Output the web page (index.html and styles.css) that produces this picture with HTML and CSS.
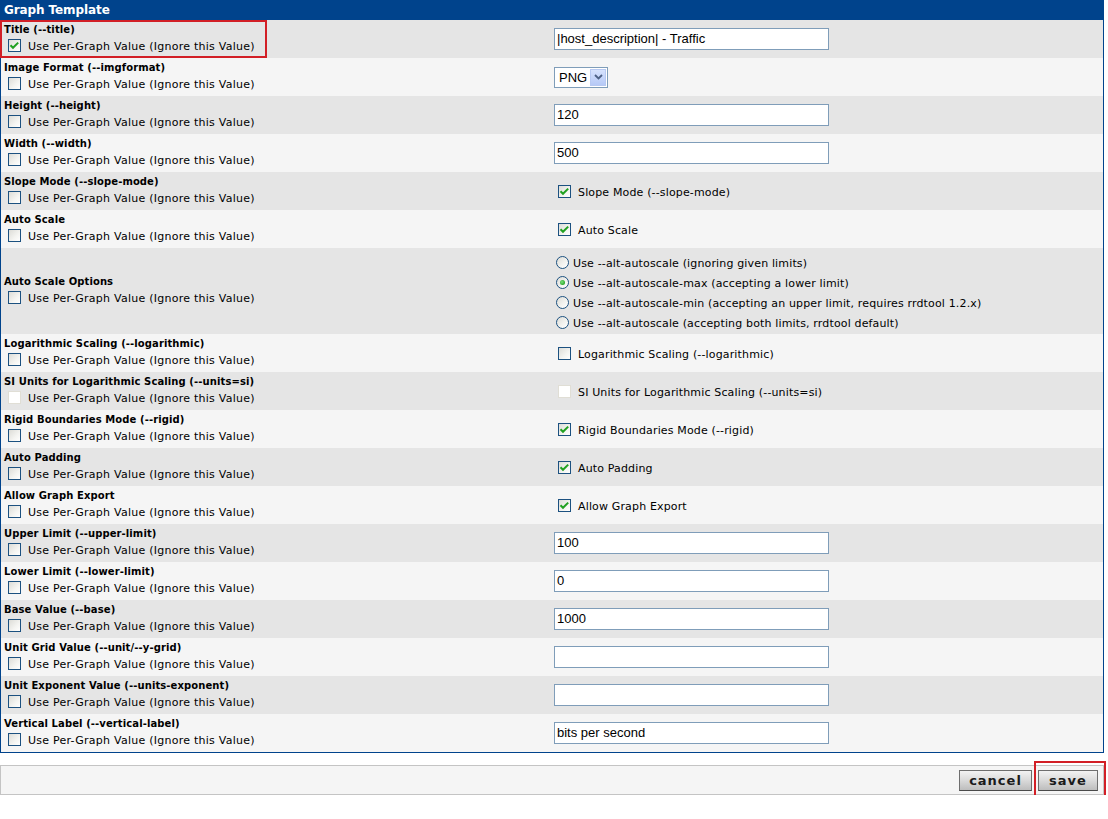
FILE: index.html
```html
<!DOCTYPE html>
<html>
<head>
<meta charset="utf-8">
<link rel="stylesheet" href="styles.css">
</head>
<body>
<div class="panel">
  <div class="panel-head">Graph Template</div>

  <div class="row dark">
    <div class="lcell">
      <div class="lbl">Title (--title)</div>
      <div class="useline"><span class="cb"><svg viewBox="0 0 13 13" width="13" height="13"><path d="M2.5 6.2 L5 8.8 L10.2 3.6" fill="none" stroke="#21a121" stroke-width="2"/></svg></span><span class="usetxt">Use Per-Graph Value (Ignore this Value)</span></div>
      <div class="hl-title"></div>
    </div>
    <div class="rcell"><div class="txt">|host_description| - Traffic</div></div>
  </div>

  <div class="row light">
    <div class="lcell">
      <div class="lbl">Image Format (--imgformat)</div>
      <div class="useline"><span class="cb"></span><span class="usetxt">Use Per-Graph Value (Ignore this Value)</span></div>
    </div>
    <div class="rcell"><div class="sel"><span class="selv">PNG</span><span class="selbtn"><svg viewBox="0 0 9 6" width="9" height="6"><path d="M1 1 L4.5 4.5 L8 1" fill="none" stroke="#4d6185" stroke-width="1.8"/></svg></span></div></div>
  </div>

  <div class="row dark">
    <div class="lcell">
      <div class="lbl">Height (--height)</div>
      <div class="useline"><span class="cb"></span><span class="usetxt">Use Per-Graph Value (Ignore this Value)</span></div>
    </div>
    <div class="rcell"><div class="txt">120</div></div>
  </div>

  <div class="row light">
    <div class="lcell">
      <div class="lbl">Width (--width)</div>
      <div class="useline"><span class="cb"></span><span class="usetxt">Use Per-Graph Value (Ignore this Value)</span></div>
    </div>
    <div class="rcell"><div class="txt">500</div></div>
  </div>

  <div class="row dark">
    <div class="lcell">
      <div class="lbl">Slope Mode (--slope-mode)</div>
      <div class="useline"><span class="cb"></span><span class="usetxt">Use Per-Graph Value (Ignore this Value)</span></div>
    </div>
    <div class="rcell"><div class="rcheck"><span class="cb"><svg viewBox="0 0 13 13" width="13" height="13"><path d="M2.5 6.2 L5 8.8 L10.2 3.6" fill="none" stroke="#21a121" stroke-width="2"/></svg></span><span class="usetxt">Slope Mode (--slope-mode)</span></div></div>
  </div>

  <div class="row light">
    <div class="lcell">
      <div class="lbl">Auto Scale</div>
      <div class="useline"><span class="cb"></span><span class="usetxt">Use Per-Graph Value (Ignore this Value)</span></div>
    </div>
    <div class="rcell"><div class="rcheck"><span class="cb"><svg viewBox="0 0 13 13" width="13" height="13"><path d="M2.5 6.2 L5 8.8 L10.2 3.6" fill="none" stroke="#21a121" stroke-width="2"/></svg></span><span class="usetxt">Auto Scale</span></div></div>
  </div>

  <div class="row dark tall">
    <div class="lcell">
      <div class="lbl">Auto Scale Options</div>
      <div class="useline"><span class="cb"></span><span class="usetxt">Use Per-Graph Value (Ignore this Value)</span></div>
    </div>
    <div class="rcell">
      <div class="radios">
        <div class="rline"><span class="rb"></span><span class="rtxt">Use --alt-autoscale (ignoring given limits)</span></div>
        <div class="rline"><span class="rb on"><span class="dot"></span></span><span class="rtxt">Use --alt-autoscale-max (accepting a lower limit)</span></div>
        <div class="rline"><span class="rb"></span><span class="rtxt">Use --alt-autoscale-min (accepting an upper limit, requires rrdtool 1.2.x)</span></div>
        <div class="rline"><span class="rb"></span><span class="rtxt">Use --alt-autoscale (accepting both limits, rrdtool default)</span></div>
      </div>
    </div>
  </div>

  <div class="row light">
    <div class="lcell">
      <div class="lbl">Logarithmic Scaling (--logarithmic)</div>
      <div class="useline"><span class="cb"></span><span class="usetxt">Use Per-Graph Value (Ignore this Value)</span></div>
    </div>
    <div class="rcell"><div class="rcheck"><span class="cb"></span><span class="usetxt">Logarithmic Scaling (--logarithmic)</span></div></div>
  </div>

  <div class="row dark">
    <div class="lcell">
      <div class="lbl">SI Units for Logarithmic Scaling (--units=si)</div>
      <div class="useline"><span class="cb off"></span><span class="usetxt">Use Per-Graph Value (Ignore this Value)</span></div>
    </div>
    <div class="rcell"><div class="rcheck"><span class="cb off"></span><span class="usetxt">SI Units for Logarithmic Scaling (--units=si)</span></div></div>
  </div>

  <div class="row light">
    <div class="lcell">
      <div class="lbl">Rigid Boundaries Mode (--rigid)</div>
      <div class="useline"><span class="cb"></span><span class="usetxt">Use Per-Graph Value (Ignore this Value)</span></div>
    </div>
    <div class="rcell"><div class="rcheck"><span class="cb"><svg viewBox="0 0 13 13" width="13" height="13"><path d="M2.5 6.2 L5 8.8 L10.2 3.6" fill="none" stroke="#21a121" stroke-width="2"/></svg></span><span class="usetxt">Rigid Boundaries Mode (--rigid)</span></div></div>
  </div>

  <div class="row dark">
    <div class="lcell">
      <div class="lbl">Auto Padding</div>
      <div class="useline"><span class="cb"></span><span class="usetxt">Use Per-Graph Value (Ignore this Value)</span></div>
    </div>
    <div class="rcell"><div class="rcheck"><span class="cb"><svg viewBox="0 0 13 13" width="13" height="13"><path d="M2.5 6.2 L5 8.8 L10.2 3.6" fill="none" stroke="#21a121" stroke-width="2"/></svg></span><span class="usetxt">Auto Padding</span></div></div>
  </div>

  <div class="row light">
    <div class="lcell">
      <div class="lbl">Allow Graph Export</div>
      <div class="useline"><span class="cb"></span><span class="usetxt">Use Per-Graph Value (Ignore this Value)</span></div>
    </div>
    <div class="rcell"><div class="rcheck"><span class="cb"><svg viewBox="0 0 13 13" width="13" height="13"><path d="M2.5 6.2 L5 8.8 L10.2 3.6" fill="none" stroke="#21a121" stroke-width="2"/></svg></span><span class="usetxt">Allow Graph Export</span></div></div>
  </div>

  <div class="row dark">
    <div class="lcell">
      <div class="lbl">Upper Limit (--upper-limit)</div>
      <div class="useline"><span class="cb"></span><span class="usetxt">Use Per-Graph Value (Ignore this Value)</span></div>
    </div>
    <div class="rcell"><div class="txt">100</div></div>
  </div>

  <div class="row light">
    <div class="lcell">
      <div class="lbl">Lower Limit (--lower-limit)</div>
      <div class="useline"><span class="cb"></span><span class="usetxt">Use Per-Graph Value (Ignore this Value)</span></div>
    </div>
    <div class="rcell"><div class="txt">0</div></div>
  </div>

  <div class="row dark">
    <div class="lcell">
      <div class="lbl">Base Value (--base)</div>
      <div class="useline"><span class="cb"></span><span class="usetxt">Use Per-Graph Value (Ignore this Value)</span></div>
    </div>
    <div class="rcell"><div class="txt">1000</div></div>
  </div>

  <div class="row light">
    <div class="lcell">
      <div class="lbl">Unit Grid Value (--unit/--y-grid)</div>
      <div class="useline"><span class="cb"></span><span class="usetxt">Use Per-Graph Value (Ignore this Value)</span></div>
    </div>
    <div class="rcell"><div class="txt"></div></div>
  </div>

  <div class="row dark">
    <div class="lcell">
      <div class="lbl">Unit Exponent Value (--units-exponent)</div>
      <div class="useline"><span class="cb"></span><span class="usetxt">Use Per-Graph Value (Ignore this Value)</span></div>
    </div>
    <div class="rcell"><div class="txt"></div></div>
  </div>

  <div class="row light">
    <div class="lcell">
      <div class="lbl">Vertical Label (--vertical-label)</div>
      <div class="useline"><span class="cb"></span><span class="usetxt">Use Per-Graph Value (Ignore this Value)</span></div>
    </div>
    <div class="rcell"><div class="txt">bits per second</div></div>
  </div>
</div>

<div class="actions">
  <span class="btn cancel">cancel</span>
  <span class="savewrap"><span class="btn save">save</span><span class="hl-save"></span></span>
</div>
</body>
</html>
```

FILE: styles.css
```css
html, body {
  margin: 0;
  padding: 0;
  background: #ffffff;
}
body {
  font-family: "DejaVu Sans", Verdana, sans-serif;
  color: #000;
}
.panel {
  width: 1102px;
  border: 1px solid #00438c;
  border-top: 0;
}
.panel-head {
  background: #00438c;
  color: #fff;
  font-weight: bold;
  font-size: 12px;
  height: 20px;
  line-height: 21px;
  padding-left: 4px;
  margin: 0 -1px;
  letter-spacing: -0.1px;
}
.row {
  display: grid;
  grid-template-columns: 551px 1fr;
  min-height: 38px;
}
.row.dark { background: #e5e5e5; }
.row.light { background: #f5f5f5; }
.row.tall { min-height: 86px; }
.lcell {
  position: relative;
  display: flex;
  flex-direction: column;
  justify-content: center;
  padding-left: 3px;
}
.lbl {
  font-size: 10px;
  font-weight: bold;
  line-height: 13px;
  letter-spacing: 0.1px;
}
.useline {
  display: flex;
  align-items: center;
  height: 19px;
  padding-left: 4px;
}
.usetxt {
  font-size: 11px;
  line-height: 13px;
  margin-left: 7px;
  letter-spacing: 0.25px;
  padding-top: 2px;
}
.cb {
  display: inline-block;
  box-sizing: border-box;
  width: 13px;
  height: 13px;
  border: 1px solid #1c5180;
  background: linear-gradient(135deg, #dcdcd7 0%, #f4f4f1 60%, #ffffff 100%);
  flex: none;
  position: relative;
}
.cb svg {
  position: absolute;
  left: -1px;
  top: -1px;
}
.cb.off {
  border-color: #e0ded5;
  background: #ffffff;
}
.rcell {
  display: flex;
  align-items: center;
  padding-left: 2px;
}
.txt {
  box-sizing: border-box;
  width: 275px;
  height: 22px;
  border: 1px solid #7f9db9;
  background: #fff;
  font-family: "Liberation Sans", Arial, sans-serif;
  font-size: 13px;
  line-height: 20px;
  padding-left: 2px;
  white-space: pre;
}
.sel {
  box-sizing: border-box;
  display: flex;
  align-items: center;
  width: 54px;
  height: 21px;
  border: 1px solid #7f9db9;
  background: #fff;
  font-family: "Liberation Sans", Arial, sans-serif;
  font-size: 13px;
  padding: 1px;
}
.selv {
  flex: 1;
  padding-left: 3px;
}
.selbtn {
  box-sizing: border-box;
  width: 16px;
  height: 17px;
  background: linear-gradient(180deg, #d6e2fd 0%, #b6c9f6 100%);
  border: 1px solid #b7c9f2;
  display: flex;
  align-items: center;
  justify-content: center;
}
.rcheck {
  display: flex;
  align-items: center;
  padding-left: 4px;
}
.rcheck .usetxt {
  margin-left: 7px;
  letter-spacing: 0.15px;
}
.radios {
  display: flex;
  flex-direction: column;
  padding-left: 2px;
  padding-top: 3px;
}
.rline {
  display: flex;
  align-items: center;
  height: 19.7px;
}
.rb {
  box-sizing: border-box;
  display: flex;
  align-items: center;
  justify-content: center;
  width: 13px;
  height: 13px;
  border-radius: 50%;
  border: 1px solid #1c5180;
  background: linear-gradient(135deg, #dcdcd7 0%, #f4f4f1 60%, #ffffff 100%);
  flex: none;
}
.rb .dot {
  width: 5px;
  height: 5px;
  border-radius: 50%;
  background: radial-gradient(circle at 40% 40%, #7be07b 0%, #21a121 80%);
}
.rtxt {
  font-size: 11px;
  line-height: 13px;
  margin-left: 4px;
  letter-spacing: 0.15px;
  padding-top: 2px;
}
.hl-title {
  position: absolute;
  left: -1px;
  top: 0;
  width: 263px;
  height: 34px;
  border: 2px solid #d21f26;
}
.actions {
  box-sizing: border-box;
  width: 1104px;
  height: 30px;
  margin-top: 12px;
  border: 1px solid #c4c4c4;
  background: #f5f5f5;
  display: flex;
  align-items: center;
  justify-content: flex-end;
  gap: 6px;
  padding-right: 5px;
}
.btn {
  box-sizing: border-box;
  display: inline-flex;
  align-items: center;
  justify-content: center;
  height: 21px;
  border: 1px solid #6e6e6e;
  border-bottom-color: #4a4a4a;
  background: linear-gradient(180deg, #f2f2f2 0%, #dcdcdc 45%, #bdbdbd 100%);
  font-family: "DejaVu Sans", Verdana, sans-serif;
  font-weight: bold;
  font-size: 13px;
  letter-spacing: 1px;
  color: #1a1a1a;
}
.cancel { width: 73px; }
.save { width: 60px; }
.savewrap {
  position: relative;
  display: inline-flex;
}
.hl-save {
  position: absolute;
  left: -4px;
  top: -9px;
  width: 68px;
  height: 35px;
  border: 2px solid #d21f26;
}
```
